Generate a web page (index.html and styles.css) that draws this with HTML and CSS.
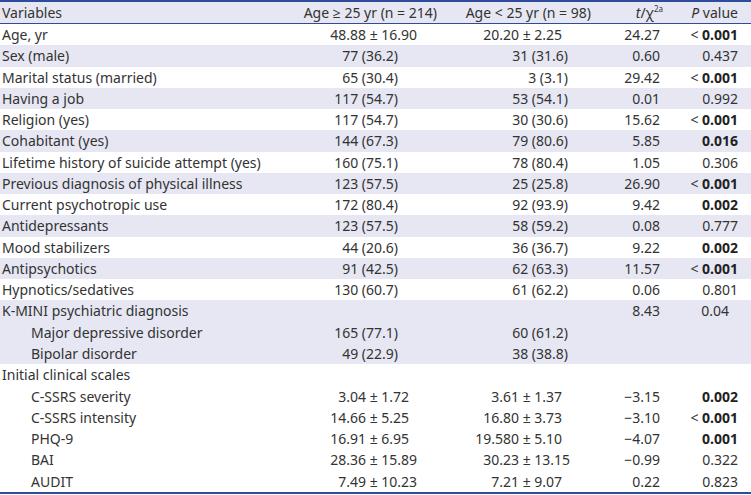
FILE: index.html
```html
<!DOCTYPE html>
<html>
<head>
<meta charset="utf-8">
<link rel="stylesheet" href="styles.css">
</head>
<body>
<table class="tbl">
  <colgroup>
    <col class="w1"><col class="w2"><col class="w3"><col class="w4"><col class="w5">
  </colgroup>
  <thead>
    <tr>
      <th class="c1">Variables</th>
      <th class="c2">Age ≥ 25 yr (n = 214)</th>
      <th class="c3">Age &lt; 25 yr (n = 98)</th>
      <th class="c4"><i>t</i>/χ<sup>2a</sup></th>
      <th class="c5"><i>P</i> value</th>
    </tr>
  </thead>
  <tbody>
    <tr class="w"><td class="c1">Age, yr</td><td class="c2"><span class="l">48.88</span> ± 16.90</td><td class="c3"><span class="l">20.20</span> ± 2.25</td><td class="c4">24.27</td><td class="c5">&lt; <b>0.001</b></td></tr>
    <tr class="s"><td class="c1">Sex (male)</td><td class="c2 p">77 (36.2)</td><td class="c3 p">31 (31.6)</td><td class="c4">0.60</td><td class="c5">0.437</td></tr>
    <tr class="w"><td class="c1">Marital status (married)</td><td class="c2 p">65 (30.4)</td><td class="c3 p">3 (3.1)</td><td class="c4">29.42</td><td class="c5">&lt; <b>0.001</b></td></tr>
    <tr class="s"><td class="c1">Having a job</td><td class="c2 p">117 (54.7)</td><td class="c3 p">53 (54.1)</td><td class="c4">0.01</td><td class="c5">0.992</td></tr>
    <tr class="w"><td class="c1">Religion (yes)</td><td class="c2 p">117 (54.7)</td><td class="c3 p">30 (30.6)</td><td class="c4">15.62</td><td class="c5">&lt; <b>0.001</b></td></tr>
    <tr class="s"><td class="c1">Cohabitant (yes)</td><td class="c2 p">144 (67.3)</td><td class="c3 p">79 (80.6)</td><td class="c4">5.85</td><td class="c5"><b>0.016</b></td></tr>
    <tr class="w"><td class="c1">Lifetime history of suicide attempt (yes)</td><td class="c2 p">160 (75.1)</td><td class="c3 p">78 (80.4)</td><td class="c4">1.05</td><td class="c5">0.306</td></tr>
    <tr class="s"><td class="c1">Previous diagnosis of physical illness</td><td class="c2 p">123 (57.5)</td><td class="c3 p">25 (25.8)</td><td class="c4">26.90</td><td class="c5">&lt; <b>0.001</b></td></tr>
    <tr class="w"><td class="c1">Current psychotropic use</td><td class="c2 p">172 (80.4)</td><td class="c3 p">92 (93.9)</td><td class="c4">9.42</td><td class="c5"><b>0.002</b></td></tr>
    <tr class="s"><td class="c1">Antidepressants</td><td class="c2 p">123 (57.5)</td><td class="c3 p">58 (59.2)</td><td class="c4">0.08</td><td class="c5">0.777</td></tr>
    <tr class="w"><td class="c1">Mood stabilizers</td><td class="c2 p">44 (20.6)</td><td class="c3 p">36 (36.7)</td><td class="c4">9.22</td><td class="c5"><b>0.002</b></td></tr>
    <tr class="s"><td class="c1">Antipsychotics</td><td class="c2 p">91 (42.5)</td><td class="c3 p">62 (63.3)</td><td class="c4">11.57</td><td class="c5">&lt; <b>0.001</b></td></tr>
    <tr class="w"><td class="c1">Hypnotics/sedatives</td><td class="c2 p">130 (60.7)</td><td class="c3 p">61 (62.2)</td><td class="c4">0.06</td><td class="c5">0.801</td></tr>
    <tr class="s"><td class="c1">K-MINI psychiatric diagnosis</td><td class="c2"></td><td class="c3"></td><td class="c4">8.43</td><td class="c5 dp">0.04</td></tr>
    <tr class="s"><td class="c1 ind">Major depressive disorder</td><td class="c2 p">165 (77.1)</td><td class="c3 p">60 (61.2)</td><td class="c4"></td><td class="c5"></td></tr>
    <tr class="s"><td class="c1 ind">Bipolar disorder</td><td class="c2 p">49 (22.9)</td><td class="c3 p">38 (38.8)</td><td class="c4"></td><td class="c5"></td></tr>
    <tr class="w"><td class="c1">Initial clinical scales</td><td class="c2"></td><td class="c3"></td><td class="c4"></td><td class="c5"></td></tr>
    <tr class="w"><td class="c1 ind">C-SSRS severity</td><td class="c2"><span class="l">3.04</span> ± 1.72</td><td class="c3"><span class="l">3.61</span> ± 1.37</td><td class="c4">−3.15</td><td class="c5"><b>0.002</b></td></tr>
    <tr class="w"><td class="c1 ind">C-SSRS intensity</td><td class="c2"><span class="l">14.66</span> ± 5.25</td><td class="c3"><span class="l">16.80</span> ± 3.73</td><td class="c4">−3.10</td><td class="c5">&lt; <b>0.001</b></td></tr>
    <tr class="w"><td class="c1 ind">PHQ-9</td><td class="c2"><span class="l">16.91</span> ± 6.95</td><td class="c3"><span class="l">19.580</span> ± 5.10</td><td class="c4">−4.07</td><td class="c5"><b>0.001</b></td></tr>
    <tr class="w"><td class="c1 ind">BAI</td><td class="c2"><span class="l">28.36</span> ± 15.89</td><td class="c3"><span class="l">30.23</span> ± 13.15</td><td class="c4">−0.99</td><td class="c5">0.322</td></tr>
    <tr class="w"><td class="c1 ind">AUDIT</td><td class="c2"><span class="l">7.49</span> ± 10.23</td><td class="c3"><span class="l">7.21</span> ± 9.07</td><td class="c4">0.22</td><td class="c5">0.823</td></tr>
  </tbody>
</table>
</body>
</html>
```

FILE: styles.css
```css
html, body {
  margin: 0;
  padding: 0;
  background: #ffffff;
}

.tbl {
  width: 751px;
  table-layout: fixed;
  border-collapse: collapse;
  font-family: "Noto Sans", "Open Sans", sans-serif;
  font-size: 14px;
  color: #333333;
  border-top: 2px solid #2d4c9c;
  border-bottom: 2px solid #2d4c9c;
}

.w1 { width: 300px; }
.w2 { width: 140px; }
.w3 { width: 152px; }
.w4 { width: 72px; }
.w5 { width: 87px; }

.tbl th {
  font-weight: normal;
  background: #e6e7f2;
  border-bottom: 1px solid #2d4c9c;
  height: 21px;
  line-height: 21px;
  padding: 0;
  white-space: nowrap;
}

.tbl td {
  height: 21.27px;
  line-height: 21.27px;
  padding: 0;
  white-space: nowrap;
}

.tbl tr.s td { background: #e6e7f2; }
.tbl tr.w td { background: #ffffff; }

.c1 { text-align: left; padding-left: 2px !important; }
.ind { padding-left: 31px !important; }

.c2 { text-align: left; }
th.c2 { text-align: right; padding-right: 3px !important; }
td.c2.p { text-align: right; padding-right: 42px !important; }
.c2 .l { display: inline-block; width: 66px; text-align: right; }

.c3 { text-align: left; }
th.c3 { text-align: right; padding-right: 1px !important; }
td.c3.p { text-align: right; padding-right: 24px !important; }
.c3 .l { display: inline-block; width: 79px; text-align: right; }

.c4 { text-align: right; padding-right: 4px !important; }
th.c4 { padding-right: 1px !important; }

.c5 { text-align: right; padding-right: 13px !important; }
.c5.dp { padding-right: 22px !important; }

.tbl b { font-weight: 700; color: #222; }

sup {
  font-size: 8px;
  line-height: 0;
  vertical-align: 6px;
}
```
